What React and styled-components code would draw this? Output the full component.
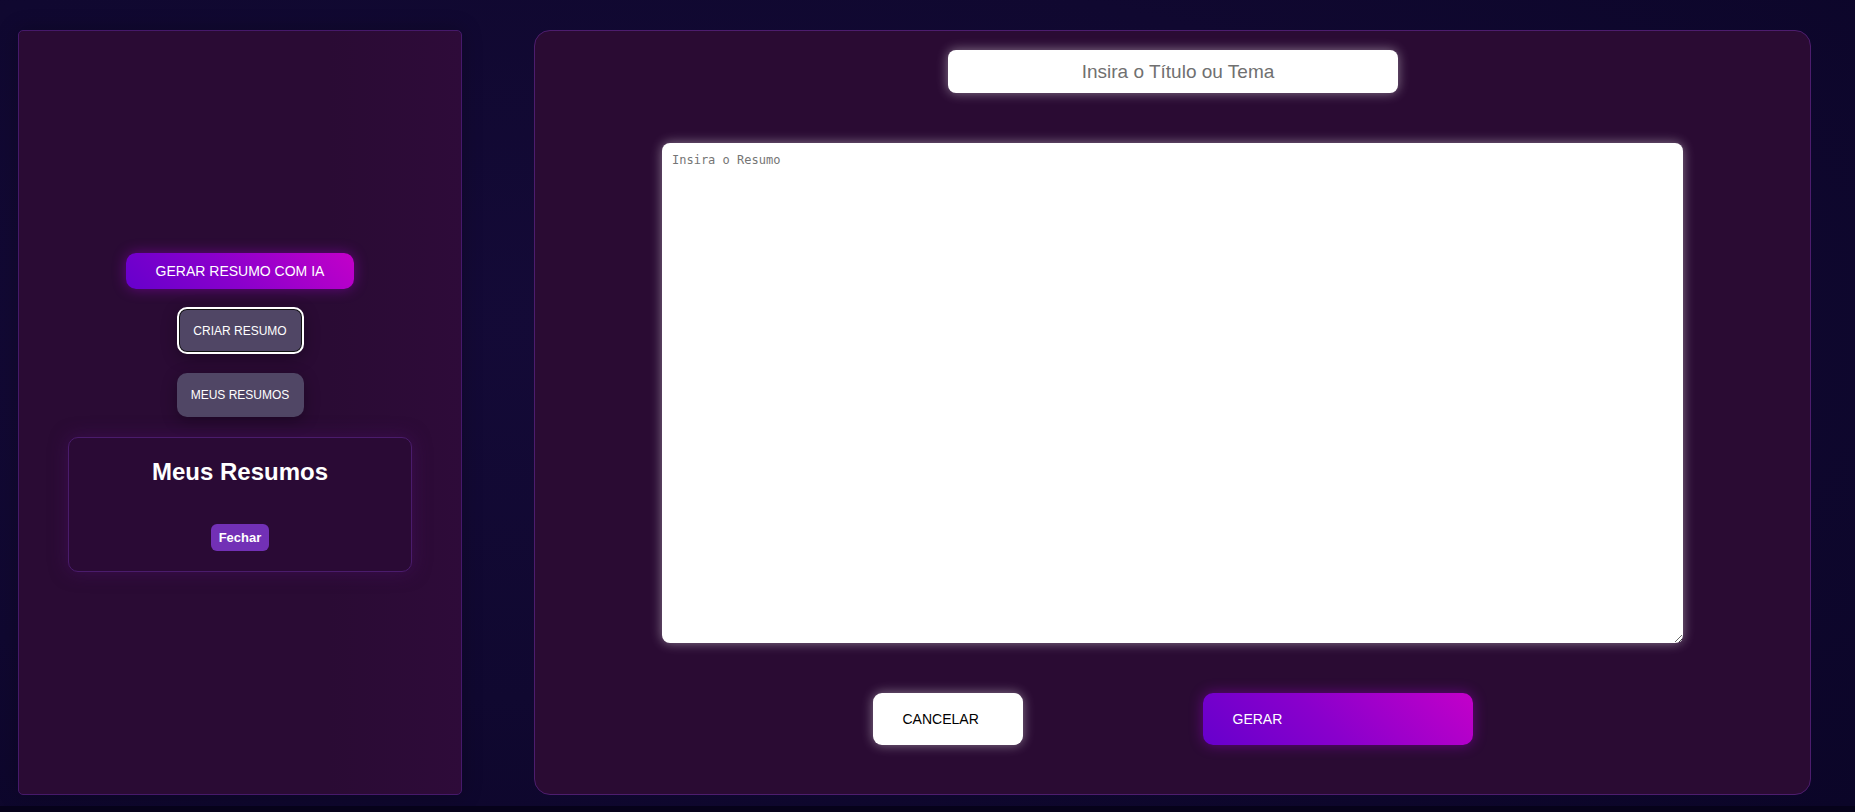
import styled, { createGlobalStyle } from 'styled-components';

const GlobalStyle = createGlobalStyle`
  html, body {
    margin: 0;
    padding: 0;
    background: #06021a;
    font-family: "Liberation Sans", Arial, sans-serif;
  }
  * {
    box-sizing: border-box;
  }
`;

const Page = styled.div`
  height: 806px;
  display: flex;
  gap: 72px;
  padding: 30px 44px 11px 18px;
  background: radial-gradient(ellipse at 30% 40%, #140a37 0%, #100830 55%, #0b0528 100%);
`;

const Sidebar = styled.aside`
  width: 444px;
  flex-shrink: 0;
  display: flex;
  flex-direction: column;
  align-items: center;
  justify-content: center;
  background: linear-gradient(90deg, #2a0b34 0%, #2a0b34 70%, #2e0b39 100%);
  border: 1px solid #46196a;
  border-radius: 5px;
  box-shadow: 0 0 20px rgba(0, 0, 0, 0.25);
`;

const GradientButton = styled.button`
  font-family: "Liberation Sans", Arial, sans-serif;
  font-size: 14px;
  color: #fff;
  border: none;
  cursor: pointer;
  background: linear-gradient(45deg, #6600cc 0%, #8a00cc 45%, #c300c9 100%);
  box-shadow: 0 0 14px rgba(170, 0, 220, 0.45);
  border-radius: 10px;
  width: ${p => p.$width}px;
  height: ${p => p.$height}px;
  text-align: ${p => (p.$left ? 'left' : 'center')};
  padding: ${p => (p.$left ? '0 30px' : '0')};
`;

const MenuButton = styled.button`
  font-family: "Liberation Sans", Arial, sans-serif;
  font-size: 12px;
  color: #fff;
  width: 127px;
  height: ${p => (p.$active ? 47 : 44)}px;
  background: #504665;
  border-radius: 10px;
  cursor: pointer;
  border: ${p => (p.$active ? '2px solid #fff' : 'none')};
  box-shadow: ${p =>
    p.$active
      ? 'inset 0 0 0 1px #111, 0 4px 16px rgba(0, 0, 0, 0.3)'
      : '0 4px 16px rgba(0, 0, 0, 0.3)'};
  margin-top: ${p => p.$gap}px;
`;

const SummaryBox = styled.div`
  width: 344px;
  margin-top: 20px;
  padding: 20px;
  display: flex;
  flex-direction: column;
  align-items: center;
  background: #2a0a35;
  border: 1px solid #4a1c6c;
  border-radius: 10px;
  box-shadow: 0 0 18px rgba(70, 15, 95, 0.6);
`;

const BoxTitle = styled.h2`
  margin: 0 0 38px;
  font-size: 24px;
  font-weight: bold;
  color: #fff;
`;

const CloseButton = styled.button`
  font-family: "Liberation Sans", Arial, sans-serif;
  font-size: 13px;
  font-weight: bold;
  color: #fff;
  background: #7230b6;
  border: none;
  border-radius: 6px;
  height: 27px;
  padding: 0 8px;
  cursor: pointer;
`;

const Editor = styled.main`
  flex: 1;
  display: flex;
  flex-direction: column;
  align-items: center;
  padding-top: 19px;
  background: #2a0b33;
  border: 1px solid #4d1d6e;
  border-radius: 16px;
`;

const TitleInput = styled.input`
  width: 450px;
  height: 43px;
  border: none;
  border-radius: 8px;
  background: #fff;
  padding: 0 0 0 11px;
  text-align: center;
  font-family: "Liberation Sans", Arial, sans-serif;
  font-size: 19px;
  box-shadow: 0 0 12px rgba(255, 255, 255, 0.45);
  outline: none;
  &::placeholder {
    color: #707070;
  }
`;

const SummaryArea = styled.textarea`
  margin-top: 50px;
  width: 1021px;
  height: 500px;
  border: none;
  border-radius: 8px;
  background: #fff;
  padding: 10px;
  font-family: "DejaVu Sans Mono", "Liberation Mono", monospace;
  font-size: 12px;
  box-shadow: 0 0 12px rgba(255, 255, 255, 0.45);
  outline: none;
  &::placeholder {
    color: #757575;
  }
`;

const Actions = styled.div`
  margin-top: 50px;
  display: flex;
  gap: 180px;
`;

const CancelButton = styled.button`
  width: 150px;
  height: 52px;
  padding: 0 30px;
  text-align: left;
  font-family: "Liberation Sans", Arial, sans-serif;
  font-size: 14px;
  color: #000;
  background: #fff;
  border: none;
  border-radius: 9px;
  box-shadow: 0 0 12px rgba(255, 255, 255, 0.45);
  cursor: pointer;
`;

export default function App() {
  return (
    <>
      <GlobalStyle />
      <Page>
        <Sidebar>
          <GradientButton $width={228} $height={36}>GERAR RESUMO COM IA</GradientButton>
          <MenuButton $active $gap={18}>CRIAR RESUMO</MenuButton>
          <MenuButton $gap={19}>MEUS RESUMOS</MenuButton>
          <SummaryBox>
            <BoxTitle>Meus Resumos</BoxTitle>
            <CloseButton>Fechar</CloseButton>
          </SummaryBox>
        </Sidebar>
        <Editor>
          <TitleInput placeholder="Insira o Título ou Tema" />
          <SummaryArea placeholder="Insira o Resumo" />
          <Actions>
            <CancelButton>CANCELAR</CancelButton>
            <GradientButton $width={270} $height={52} $left>GERAR</GradientButton>
          </Actions>
        </Editor>
      </Page>
    </>
  );
}
